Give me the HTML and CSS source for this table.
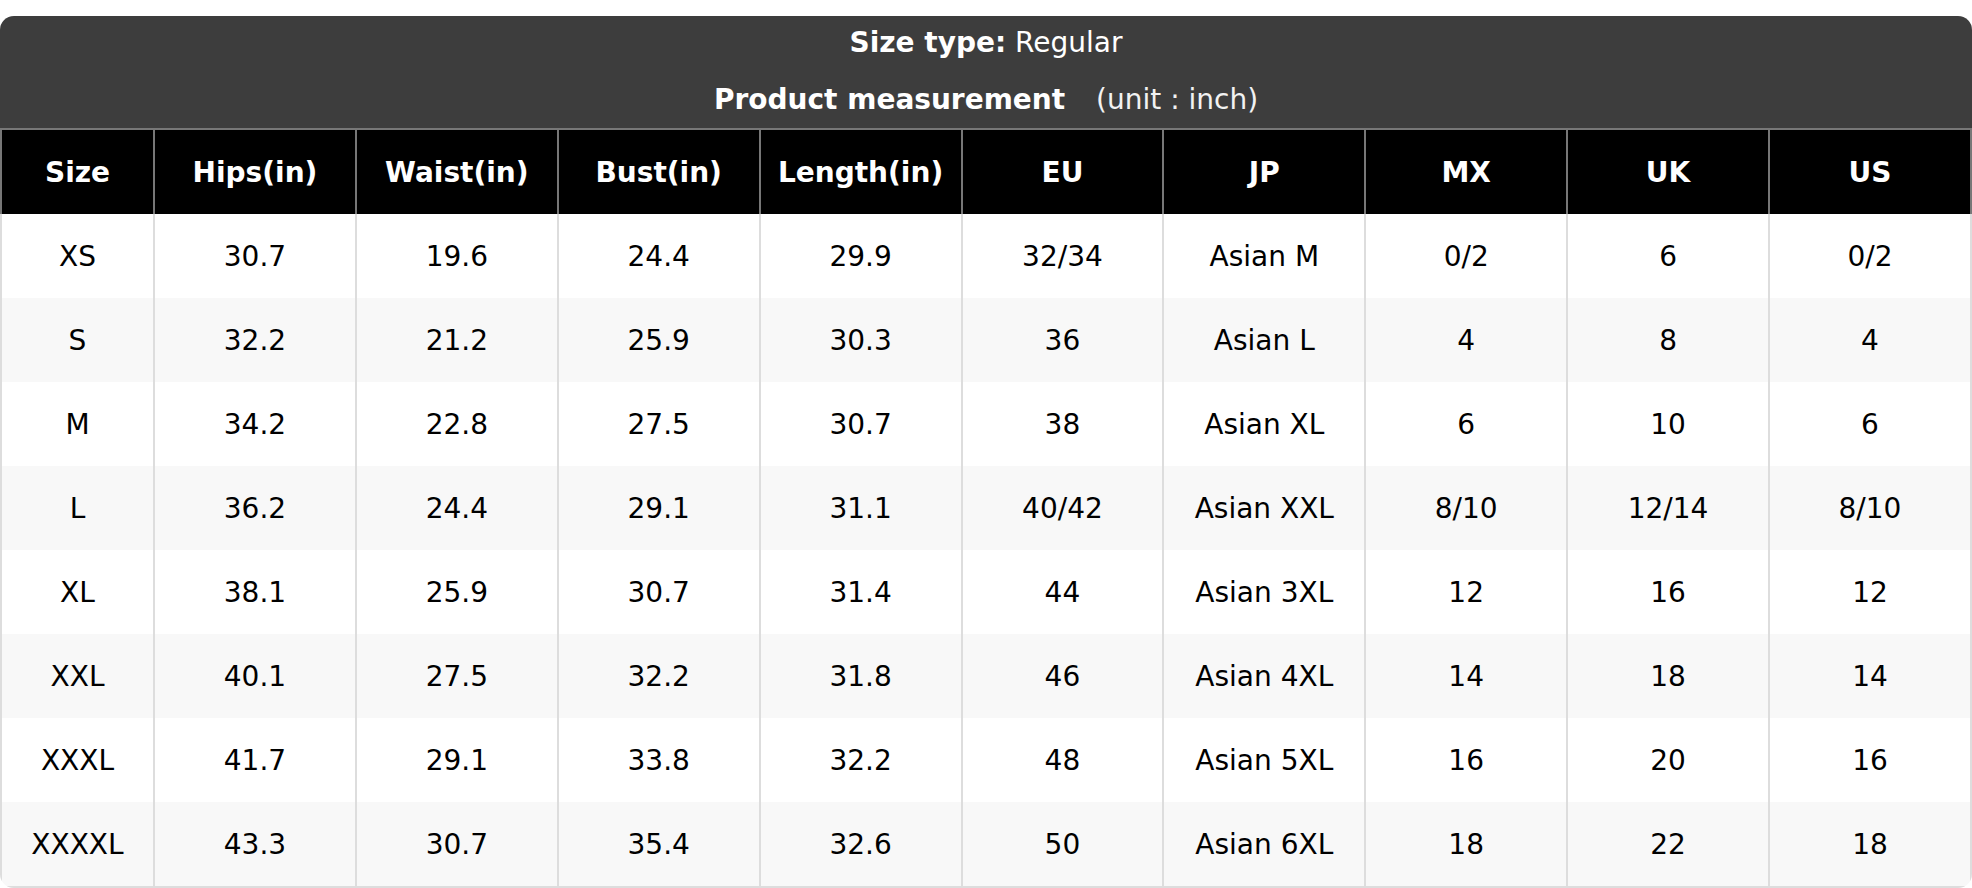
FILE: index.html
```html
<!DOCTYPE html>
<html>
<head>
<meta charset="utf-8">
<link rel="stylesheet" href="styles.css">
</head>
<body>
<div class="card">
  <div class="title">
    <div class="title-line"><b>Size type:</b> Regular</div>
    <div class="title-line"><b>Product measurement</b> <span class="unit">(unit : inch)</span></div>
  </div>
  <table class="chart">
    <colgroup>
      <col class="col-size">
      <col span="9">
    </colgroup>
    <thead>
      <tr><th>Size</th><th>Hips(in)</th><th>Waist(in)</th><th>Bust(in)</th><th>Length(in)</th><th>EU</th><th>JP</th><th>MX</th><th>UK</th><th>US</th></tr>
    </thead>
    <tbody>
      <tr><td>XS</td><td>30.7</td><td>19.6</td><td>24.4</td><td>29.9</td><td>32/34</td><td>Asian M</td><td>0/2</td><td>6</td><td>0/2</td></tr>
      <tr><td>S</td><td>32.2</td><td>21.2</td><td>25.9</td><td>30.3</td><td>36</td><td>Asian L</td><td>4</td><td>8</td><td>4</td></tr>
      <tr><td>M</td><td>34.2</td><td>22.8</td><td>27.5</td><td>30.7</td><td>38</td><td>Asian XL</td><td>6</td><td>10</td><td>6</td></tr>
      <tr><td>L</td><td>36.2</td><td>24.4</td><td>29.1</td><td>31.1</td><td>40/42</td><td>Asian XXL</td><td>8/10</td><td>12/14</td><td>8/10</td></tr>
      <tr><td>XL</td><td>38.1</td><td>25.9</td><td>30.7</td><td>31.4</td><td>44</td><td>Asian 3XL</td><td>12</td><td>16</td><td>12</td></tr>
      <tr><td>XXL</td><td>40.1</td><td>27.5</td><td>32.2</td><td>31.8</td><td>46</td><td>Asian 4XL</td><td>14</td><td>18</td><td>14</td></tr>
      <tr><td>XXXL</td><td>41.7</td><td>29.1</td><td>33.8</td><td>32.2</td><td>48</td><td>Asian 5XL</td><td>16</td><td>20</td><td>16</td></tr>
      <tr><td>XXXXL</td><td>43.3</td><td>30.7</td><td>35.4</td><td>32.6</td><td>50</td><td>Asian 6XL</td><td>18</td><td>22</td><td>18</td></tr>
    </tbody>
  </table>
</div>
</body>
</html>
```
FILE: styles.css
```css
html, body {
  margin: 0;
  padding: 0;
  background: #ffffff;
}
body {
  font-family: "DejaVu Sans", "Liberation Sans", sans-serif;
  font-size: 28px;
  color: #000000;
}
.card {
  margin-top: 16px;
  width: 1972px;
  border-radius: 14px;
  overflow: hidden;
}
.title {
  background: #3d3d3d;
  color: #ffffff;
  display: flex;
  flex-direction: column;
  align-items: center;
  gap: 17px;
  padding: 7px 0 8px;
  height: 97px;
}
.title-line {
  line-height: 40px;
  white-space: nowrap;
}
.title-line b {
  font-weight: bold;
}
.unit {
  margin-left: 22px;
  color: #f2f2f2;
}
.chart {
  width: 100%;
  border-collapse: collapse;
  table-layout: fixed;
}
.col-size {
  width: 153px;
}
.chart th {
  background: #000000;
  color: #ffffff;
  font-weight: bold;
  height: 84px;
  padding: 0;
  border: 2px solid #777777;
  border-bottom: none;
  text-align: center;
  vertical-align: middle;
}
.chart td {
  height: 84px;
  padding: 0;
  text-align: center;
  vertical-align: middle;
  border-left: 2px solid #dddddd;
  border-right: 2px solid #dddddd;
}
.chart tbody tr:nth-child(even) td {
  background: #f8f8f8;
}
.chart tbody tr:last-child td {
  border-bottom: 2px solid #dddddd;
}
```
